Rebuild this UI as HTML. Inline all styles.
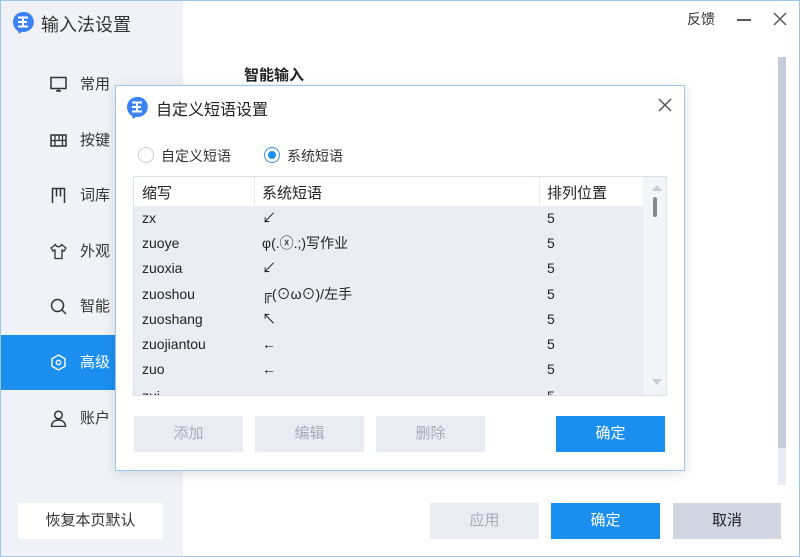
<!DOCTYPE html>
<html><head><meta charset="utf-8"><style>
*{margin:0;padding:0;box-sizing:border-box}
body{width:800px;height:557px;position:relative;overflow:hidden;background:#fff;font-family:"Liberation Sans","Noto Sans CJK SC",sans-serif;font-size:14px;color:#222}
.abs{position:absolute}
.win{left:0;top:0;width:800px;height:557px;border:1px solid #9cc8ef}
.side{left:1px;top:1px;width:182px;height:555px;background:#f0f2f7}
.item{position:absolute;left:1px;width:182px;height:55px;line-height:55px;font-size:15px;color:#333}
.item span{position:absolute;left:79px}
.item svg{position:absolute;left:49px;top:19px}
.btn{position:absolute;height:36px;line-height:36px;text-align:center;font-size:15px}
.dis{background:#e9ecf2;color:#aab}
.pri{background:#1a8ff0;color:#fff}
.row{position:absolute;left:0;width:510px;height:25px;line-height:25px;font-size:14px}
.row span{position:absolute}
</style></head><body>
<div class="abs win"></div>
<div class="abs side"></div>
<svg class="abs" style="left:12px;top:11px" width="22" height="24" viewBox="0 0 22 24"><path d="M11 1a10 10 0 0 0-10 10c0 4 2 7 5 9l1 3 3-2.2A10 10 0 1 0 11 1z" fill="#3b82f6"/><path d="M6 6.5h10M6 11h9M6 15.5h10M11 6.5v9" stroke="#fff" stroke-width="2"/></svg>
<div class="abs" style="left:41px;top:11px;font-size:18px;color:#333">输入法设置</div>
<div class="abs" style="left:687px;top:9px;font-size:14px;color:#333">反馈</div>
<div class="abs" style="left:737px;top:19px;width:14px;height:1.5px;background:#555"></div>
<svg class="abs" style="left:773px;top:12px" width="14" height="14"><path d="M1 1L13 13M13 1L1 13" stroke="#555" stroke-width="1.5"/></svg>
<div class="item" style="top:57px"><svg width="17" height="17" viewBox="0 0 17 17"><rect x="1" y="1.5" width="15" height="11" fill="none" stroke="#333" stroke-width="1.5"/><path d="M6 15h5M8.5 12.5v2.5" stroke="#333" stroke-width="1.5"/></svg><span>常用</span></div>
<div class="item" style="top:113px"><svg width="17" height="17" viewBox="0 0 17 17"><rect x="1" y="3" width="15" height="11" fill="none" stroke="#333" stroke-width="1.5"/><path d="M1 8.5h15M5 3v11M9 3v5.5M12.5 3v11" stroke="#333" stroke-width="1.3"/></svg><span>按键</span></div>
<div class="item" style="top:168px"><svg width="17" height="17" viewBox="0 0 17 17"><path d="M2.5 16V1.5h12V16M6.5 1.5v8M10.5 1.5v8" fill="none" stroke="#333" stroke-width="1.5"/></svg><span>词库</span></div>
<div class="item" style="top:224px"><svg width="17" height="17" viewBox="0 0 17 17"><path d="M5.5 1.5L1 5l2 3 2-1v8.5h7V7l2 1 2-3-4.5-3.5c-.5 1.5-1.7 2.2-3 2.2S6 3 5.5 1.5z" fill="none" stroke="#333" stroke-width="1.3"/></svg><span>外观</span></div>
<div class="item" style="top:279px"><svg width="17" height="17" viewBox="0 0 17 17"><circle cx="7.5" cy="7.5" r="6" fill="none" stroke="#333" stroke-width="1.5"/><path d="M12 12l4 4" stroke="#333" stroke-width="1.5"/></svg><span>智能</span></div>
<div class="item" style="top:335px;background:#1a8ff0;color:#fff"><svg width="17" height="17" viewBox="0 0 17 17"><path d="M8.5 1L15 4.8v7.4L8.5 16 2 12.2V4.8z" fill="none" stroke="#fff" stroke-width="1.4"/><circle cx="8.5" cy="8.5" r="2.2" fill="none" stroke="#fff" stroke-width="1.4"/></svg><span>高级</span></div>
<div class="item" style="top:391px"><svg width="17" height="17" viewBox="0 0 17 17"><circle cx="8.5" cy="5" r="3.8" fill="none" stroke="#333" stroke-width="1.5"/><path d="M1.5 16.5c0-4 3-6.5 7-6.5s7 2.5 7 6.5z" fill="none" stroke="#333" stroke-width="1.5"/></svg><span>账户</span></div>
<div class="btn" style="left:18px;top:503px;width:145px;background:#fff;color:#333">恢复本页默认</div>
<div class="abs" style="left:244px;top:64px;font-size:15px;font-weight:bold;color:#222">智能输入</div>
<div class="abs" style="left:778px;top:57px;width:8px;height:428px;background:#e9ecf2"></div>
<div class="abs" style="left:778px;top:57px;width:8px;height:391px;background:#c5cddb"></div>
<div class="btn dis" style="left:430px;top:503px;width:109px">应用</div>
<div class="btn pri" style="left:551px;top:503px;width:109px">确定</div>
<div class="btn" style="left:673px;top:503px;width:108px;background:#d0d6e2;color:#222">取消</div>
<div class="abs" style="left:115px;top:85px;width:570px;height:386px;background:#fff;border:1px solid #9cc8ef;box-shadow:0 2px 12px rgba(0,0,0,.12)">
<svg class="abs" style="left:10px;top:10px" width="22" height="24" viewBox="0 0 22 24"><path d="M11 1a10 10 0 0 0-10 10c0 4 2 7 5 9l1 3 3-2.2A10 10 0 1 0 11 1z" fill="#3b82f6"/><path d="M6 6.5h10M6 11h9M6 15.5h10M11 6.5v9" stroke="#fff" stroke-width="2"/></svg>
<div class="abs" style="left:40px;top:10px;font-size:16px;color:#222">自定义短语设置</div>
<svg class="abs" style="left:542px;top:12px" width="14" height="14"><path d="M1 1L13 13M13 1L1 13" stroke="#555" stroke-width="1.5"/></svg>
<div class="abs" style="left:22px;top:61px;width:16px;height:16px;border:1px solid #ccd;border-radius:50%"></div>
<div class="abs" style="left:45px;top:60px;font-size:14px;color:#333">自定义短语</div>
<div class="abs" style="left:148px;top:61px;width:16px;height:16px;border:1px solid #3b8ff0;border-radius:50%"><div style="margin:3px;width:8px;height:8px;border-radius:50%;background:#1a8ff0"></div></div>
<div class="abs" style="left:171px;top:60px;font-size:14px;color:#333">系统短语</div>
<div class="abs" style="left:17px;top:90px;width:534px;height:220px;border:1px solid #dde1e8;background:#eaedf4;overflow:hidden">
 <div class="abs" style="left:0;top:0;width:509px;height:29px;background:#fff"></div>
 <div class="abs" style="left:120px;top:0;width:1px;height:29px;background:#e6e9ef"></div>
 <div class="abs" style="left:405px;top:0;width:1px;height:29px;background:#e6e9ef"></div>
 <div class="abs" style="left:8px;top:5px;font-size:15px">缩写</div>
 <div class="abs" style="left:128px;top:5px;font-size:15px">系统短语</div>
 <div class="abs" style="left:413px;top:5px;font-size:15px">排列位置</div>
 <div class="abs" style="left:509px;top:0;width:24px;height:220px;background:#f3f4f7"></div>
 <div class="abs" style="left:518px;top:8px;width:0;height:0;border:5px solid transparent;border-bottom:6px solid #c8ccd4;border-top:0"></div>
 <div class="abs" style="left:519px;top:20px;width:4px;height:20px;background:#888;border-radius:2px"></div>
 <div class="abs" style="left:518px;top:202px;width:0;height:0;border:5px solid transparent;border-top:6px solid #c8ccd4;border-bottom:0"></div>
 <div class="row" style="top:29px"><span style="left:8px">zx</span><span style="left:128px">↙</span><span style="left:413px">5</span></div>
 <div class="row" style="top:54px"><span style="left:8px">zuoye</span><span style="left:128px">φ(.ⓧ.;)写作业</span><span style="left:413px">5</span></div>
 <div class="row" style="top:79px"><span style="left:8px">zuoxia</span><span style="left:128px">↙</span><span style="left:413px">5</span></div>
 <div class="row" style="top:105px"><span style="left:8px">zuoshou</span><span style="left:128px">╔(⊙ω⊙)/左手</span><span style="left:413px">5</span></div>
 <div class="row" style="top:130px"><span style="left:8px">zuoshang</span><span style="left:128px">↖</span><span style="left:413px">5</span></div>
 <div class="row" style="top:155px"><span style="left:8px">zuojiantou</span><span style="left:128px">←</span><span style="left:413px">5</span></div>
 <div class="row" style="top:180px"><span style="left:8px">zuo</span><span style="left:128px">←</span><span style="left:413px">5</span></div>
 <div class="row" style="top:207px"><span style="left:8px">zui</span><span style="left:413px">5</span></div>
</div>
<div class="btn dis" style="left:18px;top:330px;width:109px">添加</div>
<div class="btn dis" style="left:139px;top:330px;width:109px">编辑</div>
<div class="btn dis" style="left:260px;top:330px;width:109px">删除</div>
<div class="btn pri" style="left:440px;top:330px;width:109px">确定</div>
</div>
</body></html>
